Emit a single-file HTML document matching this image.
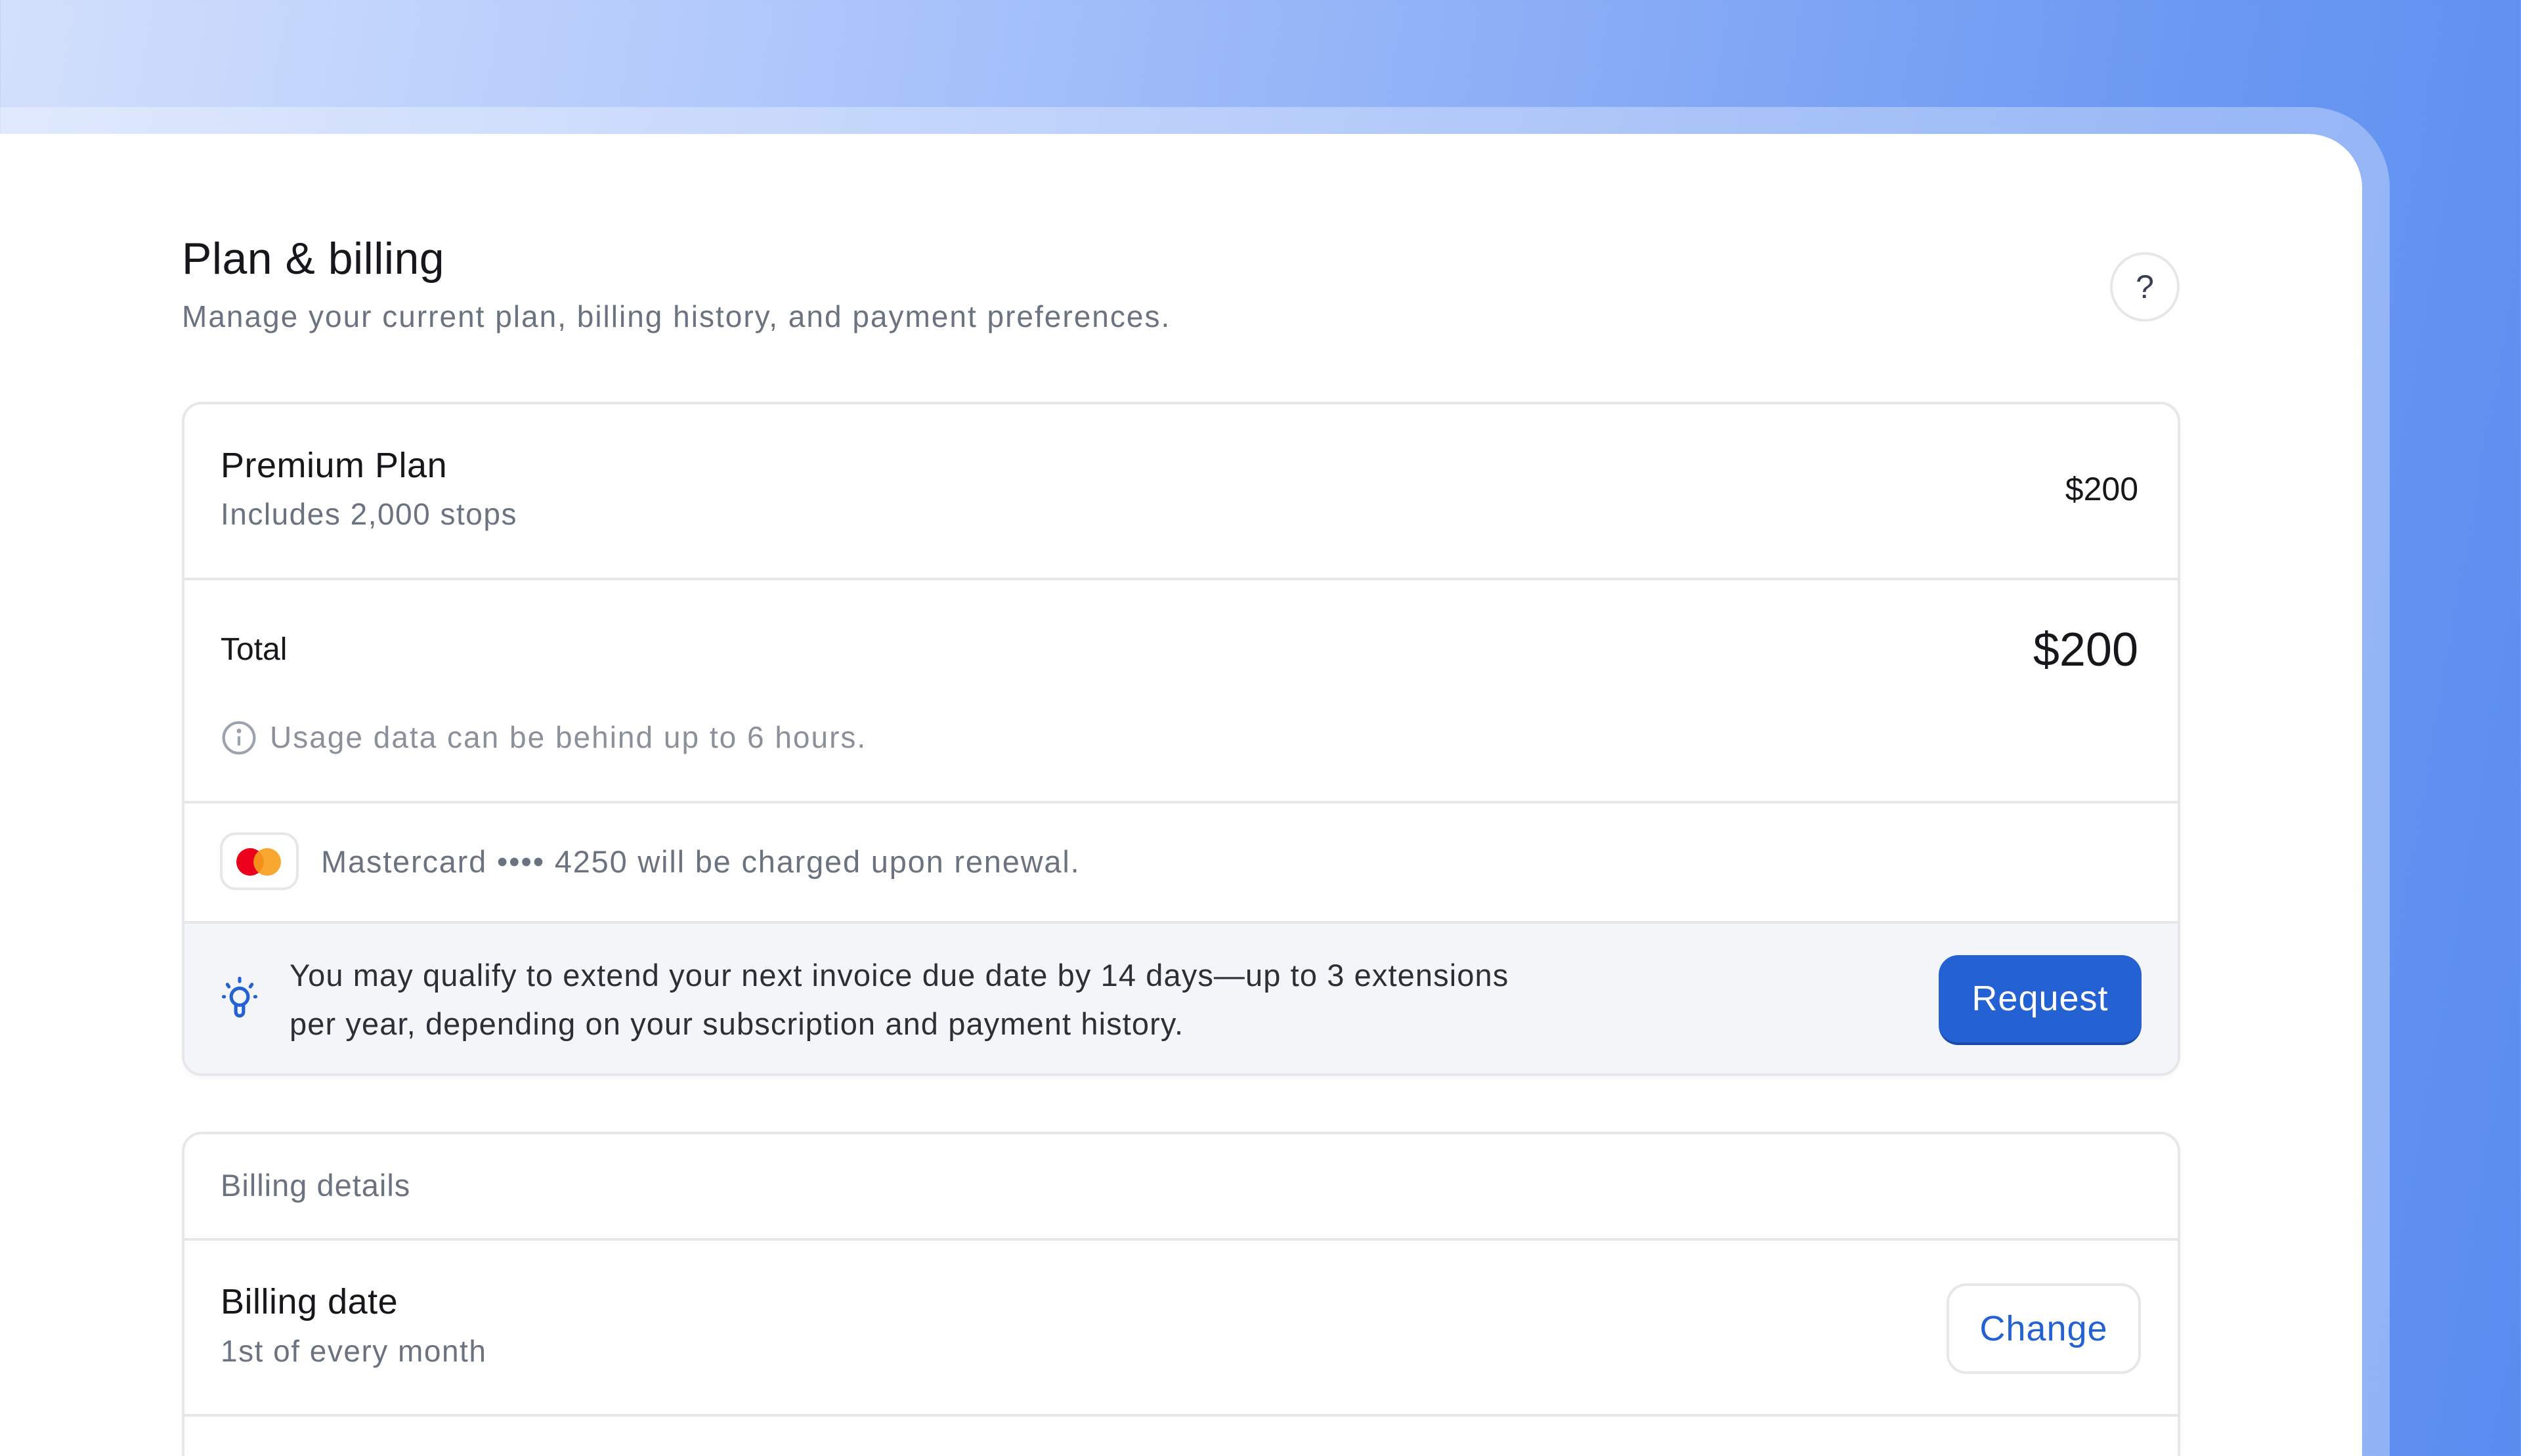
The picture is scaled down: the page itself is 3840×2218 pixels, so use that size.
<!DOCTYPE html>
<html><head><meta charset="utf-8"><style>
*{margin:0;padding:0;box-sizing:border-box}
html,body{width:3840px;height:2218px;overflow:hidden}
body{font-family:"Liberation Sans",sans-serif;background:linear-gradient(100deg,#d3e0fc 0%,#adc6fb 30%,#86aaf5 60%,#6a98f2 80%,#5a8cf0 100%);position:relative}
.outer{position:absolute;left:-50px;top:163px;width:3690px;height:2055px;border-radius:0 122px 0 0;background:rgba(255,255,255,0.32)}
.panel{position:absolute;left:0;top:204px;width:3598px;height:2014px;background:#fff;border-radius:0 82px 0 0}
.t{position:absolute;white-space:nowrap;line-height:1}
.card{position:absolute;left:277px;width:3044px;border:4px solid #e6e7eb;border-radius:30px;background:#fff;overflow:hidden;box-shadow:0 4px 8px rgba(0,0,0,0.03)}
.div{position:absolute;left:0;right:0;height:4px;background:#e6e7eb}
.gray{color:#6b7280}
</style></head><body>
<div class="outer"></div>
<div class="panel"></div>

<div class="t" style="left:277px;top:360px;font-size:68px;color:#16171b;letter-spacing:0.5px">Plan &amp; billing</div>
<div class="t gray" style="left:277px;top:459px;font-size:46px;letter-spacing:2px">Manage your current plan, billing history, and payment preferences.</div>
<div style="position:absolute;left:3214px;top:384px;width:106px;height:106px;border:4px solid #e6e7eb;border-radius:50%;font-size:50px;color:#374151;text-align:center;line-height:98px">?</div>

<div class="card" style="top:612px;height:1027px">
  <div class="t" style="left:55px;top:66px;font-size:54px;color:#16171b;font-weight:500;letter-spacing:0.5px">Premium Plan</div>
  <div class="t gray" style="left:55px;top:144px;font-size:46px;letter-spacing:1.5px">Includes 2,000 stops</div>
  <div class="t" style="right:60px;top:104px;font-size:50px;color:#16171b">$200</div>
  <div class="div" style="top:264px"></div>
  <div class="t" style="left:55px;top:350px;font-size:48px;color:#16171b">Total</div>
  <div class="t" style="right:60px;top:338px;font-size:72px;color:#16171b">$200</div>
  <svg style="position:absolute;left:55px;top:480px" width="56" height="56" viewBox="0 0 24 24" fill="none" stroke="#9ca3af" stroke-width="1.8"><circle cx="12" cy="12" r="10"/><line x1="12" y1="11" x2="12" y2="17"/><circle cx="12" cy="7.5" r="0.6" fill="#9ca3af"/></svg>
  <div class="t" style="left:130px;top:484px;font-size:46px;color:#8b909a;letter-spacing:2px">Usage data can be behind up to 6 hours.</div>
  <div class="div" style="top:604px"></div>
  <div style="position:absolute;left:54px;top:652px;width:120px;height:88px;border:4px solid #e6e7eb;border-radius:24px"></div>
  <div style="position:absolute;left:79px;top:676px;width:42px;height:42px;border-radius:50%;background:#eb001b"></div>
  <div style="position:absolute;left:105px;top:676px;width:42px;height:42px;border-radius:50%;background:#f79e1b;opacity:.9"></div>
  <div class="t gray" style="left:208px;top:673px;font-size:47px;letter-spacing:1.8px">Mastercard •••• 4250 will be charged upon renewal.</div>
  <div class="div" style="top:787px"></div>
  <div style="position:absolute;left:0;right:0;top:791px;bottom:0;background:#f3f5f9"></div>
  <svg style="position:absolute;left:56px;top:872px" width="56" height="70" viewBox="0 0 24 30" fill="none" stroke="#2461d3" stroke-width="2.2" stroke-linecap="round"><circle cx="12" cy="13" r="5.5"/><path d="M9.5 18v5a2.5 2.5 0 0 0 5 0v-5"/><line x1="12" y1="1" x2="12" y2="3"/><line x1="4" y1="5" x2="5" y2="6.5"/><line x1="20" y1="5" x2="19" y2="6.5"/><line x1="1.5" y1="13" x2="2" y2="13"/><line x1="22" y1="13" x2="22.5" y2="13"/></svg>
  <div class="t" style="left:160px;top:846px;font-size:47px;color:#2c2f38;letter-spacing:1.1px">You may qualify to extend your next invoice due date by 14 days—up to 3 extensions</div>
  <div class="t" style="left:160px;top:920px;font-size:47px;color:#2c2f38;letter-spacing:1.1px">per year, depending on your subscription and payment history.</div>
  <div style="position:absolute;left:2672px;top:839px;width:309px;height:137px;border-radius:30px;background:#2461d3;border-bottom:4px solid #1a4aa8;color:#fff;font-size:54px;text-align:center;line-height:133px;letter-spacing:1px">Request</div>
</div>

<div class="card" style="top:1724px;height:520px">
  <div class="t gray" style="left:55px;top:54px;font-size:47px;letter-spacing:1px">Billing details</div>
  <div class="div" style="top:158px"></div>
  <div class="t" style="left:55px;top:228px;font-size:54px;color:#16171b;letter-spacing:0.5px">Billing date</div>
  <div class="t gray" style="left:55px;top:307px;font-size:46px;letter-spacing:1.5px">1st of every month</div>
  <div style="position:absolute;left:2684px;top:227px;width:296px;height:138px;border:4px solid #e6e7eb;border-radius:30px;color:#2461d3;font-size:54px;text-align:center;line-height:130px;letter-spacing:1px">Change</div>
  <div class="div" style="top:426px"></div>
</div>
</body></html>
